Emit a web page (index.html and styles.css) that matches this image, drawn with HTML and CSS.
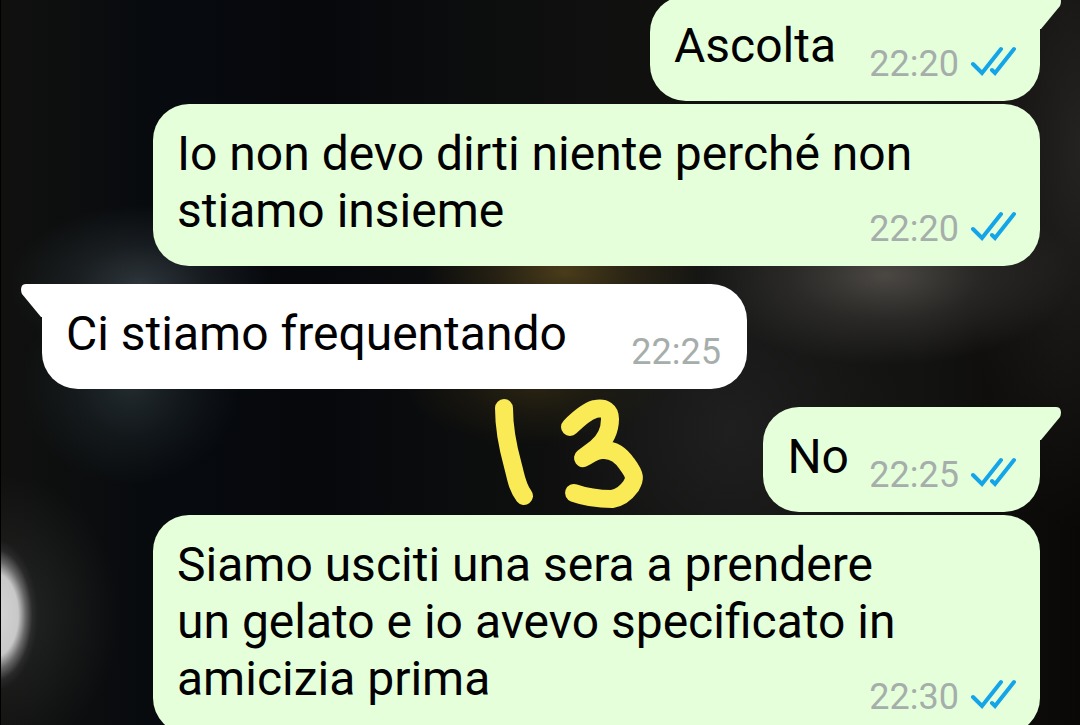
FILE: index.html
```
<!DOCTYPE html>
<html lang="it">
  <head>
    <meta charset="UTF-8" />
    <meta name="viewport" content="width=device-width, initial-scale=1.0" />
    <title>Chat</title>
    <link rel="stylesheet" href="styles.css">
  </head>
  <body>
    <svg class="defs" aria-hidden="true">
      <symbol id="ticks" viewBox="0 0 46 30">
        <path d="M3 18 L12 27 L31 3 M22 24 L25 27 L44 3" />
      </symbol>
      <symbol id="tail" viewBox="0 0 22 34">
        <path d="M0 0 H16 C21 0 22 5 20 10 L1 33 H0 Z" />
      </symbol>
    </svg>

    <main class="chat">
      <div class="message out first">
        <svg class="tail"><use href="#tail" /></svg>
        <p class="text">Ascolta</p>
        <div class="meta">
          <time>22:20</time>
          <svg class="ticks"><use href="#ticks" /></svg>
        </div>
      </div>

      <div class="message out long">
        <p class="text">Io non devo dirti niente perché non stiamo insieme</p>
        <div class="meta">
          <time>22:20</time>
          <svg class="ticks"><use href="#ticks" /></svg>
        </div>
      </div>

      <div class="message in first">
        <svg class="tail"><use href="#tail" /></svg>
        <p class="text">Ci stiamo frequentando</p>
        <div class="meta">
          <time>22:25</time>
        </div>
      </div>

      <div class="message out first short">
        <svg class="tail"><use href="#tail" /></svg>
        <p class="text">No</p>
        <div class="meta">
          <time>22:25</time>
          <svg class="ticks"><use href="#ticks" /></svg>
        </div>
      </div>

      <div class="message out long">
        <p class="text">Siamo usciti una sera a prendere un gelato e io avevo specificato in amicizia prima</p>
        <div class="meta">
          <time>22:30</time>
          <svg class="ticks"><use href="#ticks" /></svg>
        </div>
      </div>

      <!-- hand drawn number -->
      <svg class="doodle" viewBox="0 0 190 140" role="img" aria-label="13">
        <path d="M24 28 C24 50 28 68 33 86 C36 97 37 107 44 116" />
        <path d="M90 47 C100 37 108 31 115 29 C125 27 130 31 130 39 C130 50 125 61 116 68 L103 78 C111 75 113 70 122 70 C133 69 141 75 147 84 C156 96 155 99 151 106 C146 113 139 118 132 119 C119 119 108 118 94 113" />
      </svg>
    </main>
  </body>
</html>
```
FILE: styles.css
```
* {
  box-sizing: border-box;
}

body {
  margin: 0;
  height: 100vh;
  overflow: hidden;
  font-family: Roboto, "Liberation Sans", sans-serif;
  border-left: 1px solid #000;
  background-color: #0c0d0e;
  background-image:
    radial-gradient(ellipse 44px 76px at -6px 615px, #d6d6d6 0, #c8c8c8 55%, rgba(150, 150, 150, 0.6) 72%, rgba(70, 70, 70, 0.3) 87%, transparent 100%),
    radial-gradient(ellipse 110px 140px at 10px 615px, rgba(50, 52, 50, 0.6), transparent),
    radial-gradient(ellipse 130px 80px at 140px 285px, #2e363b 0, rgba(46, 54, 59, 0.4) 50%, transparent 100%),
    radial-gradient(ellipse 110px 100px at 130px 385px, #222b2f 0, rgba(34, 43, 47, 0.4) 50%, transparent 100%),
    radial-gradient(ellipse 140px 70px at 565px 272px, #4a3c1a 0, rgba(74, 60, 26, 0.4) 50%, transparent 100%),
    radial-gradient(ellipse 130px 60px at 535px 385px, #2a2412 0, rgba(42, 36, 18, 0.4) 50%, transparent 100%),
    radial-gradient(ellipse 190px 90px at 885px 275px, #4b4844 0, rgba(75, 72, 68, 0.4) 50%, transparent 100%),
    radial-gradient(ellipse 120px 380px at 1080px 150px, #242321, transparent),
    radial-gradient(ellipse 180px 200px at 730px 430px, #1f1f1f, transparent),
    linear-gradient(to right, #10110f 0, #070a0e 15%, #06080c 30%, #0b0c0d 40%, #10110f 60%, #131312 85%, #0a0806 100%);
}

.defs {
  display: none;
}

.chat {
  position: relative;
  display: flex;
  flex-direction: column;
  gap: 3px;
  margin-top: -4px;
  padding: 0 40px 0 41px;
}

/* text and time share one cell, the time sits in its bottom right corner */
.message {
  position: relative;
  display: grid;
  padding: 21px 24px 22px;
  border-radius: 36px;
  color: #000;
}

.message > .text,
.message > .meta {
  grid-area: 1 / 1;
}

.out {
  align-self: flex-end;
  background-color: #e5ffdb;
}

.in {
  align-self: flex-start;
  background-color: #fff;
}

.message + .first {
  margin-top: 15px;
}

.out.first {
  border-top-right-radius: 0;
}

.in.first {
  border-top-left-radius: 0;
}

.long {
  width: 887px;
  max-width: 100%;
}

.text {
  margin: 0;
  padding: 0 180px 5px 0;
  font-size: 48px;
  line-height: 57px;
}

.in .text {
  padding-right: 156px;
}

.short .text {
  padding-right: 167px;
}

.long .text {
  padding-right: 90px;
}

.meta {
  display: flex;
  align-items: center;
  align-self: end;
  justify-self: end;
  gap: 11px;
  height: 30px;
  color: #a6aeab;
  font-size: 36px;
  line-height: 30px;
}

.in .meta {
  padding-right: 2px;
}

.ticks {
  width: 46px;
  height: 30px;
  margin-bottom: 6px;
  fill: none;
  stroke: #14a5e8;
  stroke-width: 4;
  stroke-linecap: round;
}

.tail {
  position: absolute;
  top: 0;
  left: 100%;
  width: 22px;
  height: 34px;
  fill: #e5ffdb;
}

.in .tail {
  left: auto;
  right: 100%;
  fill: #fff;
  transform: scaleX(-1);
}

.doodle {
  position: absolute;
  top: 384px;
  left: 479px;
  width: 190px;
  height: 140px;
  fill: none;
  stroke: #faea55;
  stroke-width: 18;
  stroke-linecap: round;
  stroke-linejoin: round;
}
```
